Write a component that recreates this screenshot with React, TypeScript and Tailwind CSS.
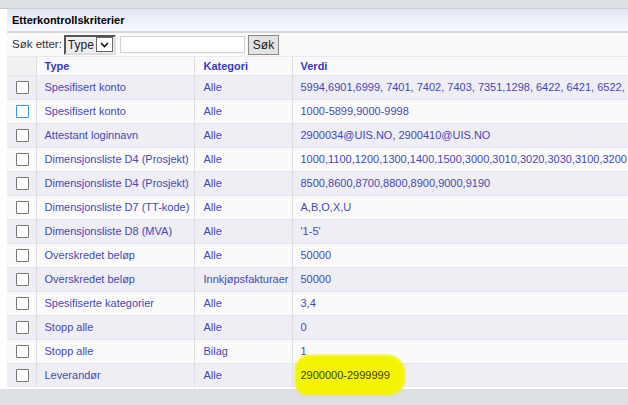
import React from 'react';

type Row = { type: string; kategori: string; verdi: string; focus?: boolean; mark?: boolean };

const rows: Row[] = [
  { type: 'Spesifisert konto', kategori: 'Alle', verdi: '5994,6901,6999, 7401, 7402, 7403, 7351,1298, 6422, 6421, 6522, 6523' },
  { type: 'Spesifisert konto', kategori: 'Alle', verdi: '1000-5899,9000-9998', focus: true },
  { type: 'Attestant loginnavn', kategori: 'Alle', verdi: '2900034@UIS.NO, 2900410@UIS.NO' },
  { type: 'Dimensjonsliste D4 (Prosjekt)', kategori: 'Alle', verdi: '1000,1100,1200,1300,1400,1500,3000,3010,3020,3030,3100,3200,3300' },
  { type: 'Dimensjonsliste D4 (Prosjekt)', kategori: 'Alle', verdi: '8500,8600,8700,8800,8900,9000,9190' },
  { type: 'Dimensjonsliste D7 (TT-kode)', kategori: 'Alle', verdi: 'A,B,O,X,U' },
  { type: 'Dimensjonsliste D8 (MVA)', kategori: 'Alle', verdi: "'1-5'" },
  { type: 'Overskredet beløp', kategori: 'Alle', verdi: '50000' },
  { type: 'Overskredet beløp', kategori: 'Innkjøpsfakturaer', verdi: '50000' },
  { type: 'Spesifiserte kategorier', kategori: 'Alle', verdi: '3,4' },
  { type: 'Stopp alle', kategori: 'Alle', verdi: '0' },
  { type: 'Stopp alle', kategori: 'Bilag', verdi: '1' },
  { type: 'Leverandør', kategori: 'Alle', verdi: '2900000-2999999', mark: true },
];

function Check({ focus }: { focus?: boolean }) {
  return (
    <span
      className={
        'block w-[13px] h-[13px] bg-white border rounded-[1px] ' +
        (focus ? 'border-[#3b99d8]' : 'border-[#767676]')
      }
    />
  );
}

export default function App() {
  return (
    <div
      className="w-[628px] h-[405px] overflow-hidden bg-white flex flex-col text-[11px] text-[#4747b6]"
      style={{ fontFamily: '"Liberation Sans", Arial, sans-serif' }}
    >
      <div className="h-[9px] shrink-0 bg-[#dce0e3] border-b border-[#c9cdd1]" />
      <div className="pl-[7px] shrink-0">
        <div className="h-[24px] flex items-center pl-[5px] font-bold text-black bg-gradient-to-b from-[#e1e7f3] to-[#f8faff] border-b-2 border-[#d3d5d9]">
          Etterkontrollskriterier
        </div>
        <div className="h-[24px] flex items-center pl-[5px] bg-[#fafafa] border-b border-[#eaeaea] text-[#333]">
          <span className="text-[11.5px]">Søk etter:</span>
          <span className="ml-[2px] flex items-center h-[20px] w-[52px] border-2 border-t-[#555] border-l-[#555] border-r-[#ddd] border-b-[#ddd] bg-[#eee] pl-[2px]">
            <span className="text-[12px] text-[#222] flex-1 leading-none">Type</span>
            <span className="mr-[1px] w-[17px] h-[15px] border border-[#666] bg-white flex items-center justify-center">
              <svg width="9" height="6" viewBox="0 0 9 6">
                <path d="M1 1 L4.5 4.5 L8 1" fill="none" stroke="#111" strokeWidth="1.6" />
              </svg>
            </span>
          </span>
          <span className="ml-[4px] h-[17px] w-[125px] border border-[#d0d0d0] bg-white" />
          <span className="ml-[3px] h-[20px] px-[4px] flex items-center border border-[#8a8a8a] bg-[#e4e4e4] text-[12px] text-[#222]">
            Søk
          </span>
        </div>
        <table className="border-collapse table-fixed w-[720px]">
          <colgroup>
            <col className="w-[29px]" />
            <col className="w-[158px]" />
            <col className="w-[98px]" />
            <col className="w-[435px]" />
          </colgroup>
          <thead>
            <tr className="h-[18px] bg-[#fafafa] text-[#3a3ac2] font-bold text-left">
              <th className="bg-[#f1f1f3] border-r border-[#dedee2]" />
              <th className="pl-[8px] font-bold border-r border-[#dedee2]">Type</th>
              <th className="pl-[9px] font-bold border-r border-[#dedee2]">Kategori</th>
              <th className="pl-[8px] font-bold">Verdi</th>
            </tr>
          </thead>
          <tbody>
            {rows.map((r, i) => (
              <tr
                key={i}
                className={
                  'h-[24px] border-t border-[#e6e6ea] ' + (i % 2 === 0 ? 'bg-[#eeeef4]' : 'bg-[#fafafa]')
                }
              >
                <td className="border-r border-[#dedee2] pl-[9px]">
                  <Check focus={r.focus} />
                </td>
                <td className="pl-[8px] border-r border-[#dedee2] whitespace-nowrap">{r.type}</td>
                <td className="pl-[9px] border-r border-[#dedee2] whitespace-nowrap">{r.kategori}</td>
                <td className="pl-[8px] whitespace-nowrap relative">
                  {r.mark && (
                    <span className="absolute left-[2px] top-[-9px] w-[110px] h-[40px] rounded-[14px_18px_16px_12px] bg-[#f4f400] blur-[1px]" />
                  )}
                  <span className={'relative ' + (r.mark ? 'text-[#3d3d12]' : '')}>{r.verdi}</span>
                </td>
              </tr>
            ))}
          </tbody>
        </table>
      </div>
      <div className="h-[2px] shrink-0" />
      <div className="flex-1 bg-[#dcdfe3]" />
    </div>
  );
}
